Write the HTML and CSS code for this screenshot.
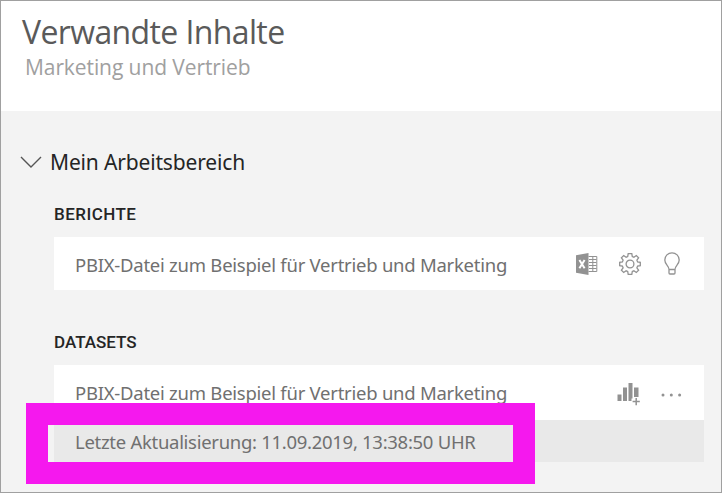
FILE: index.html
```html
<!DOCTYPE html>
<html lang="de">
<head>
<meta charset="utf-8">
<title>Verwandte Inhalte</title>
<link rel="stylesheet" href="styles.css">
</head>
<body>
<main class="panel">
  <header class="header">
    <h1 class="title"><span>Verwandte Inhalte</span></h1>
    <p class="subtitle"><span>Marketing und Vertrieb</span></p>
  </header>
  <section class="workspace">
    <h2 class="workspace-name">
      <svg class="chevron" width="22" height="13" viewBox="0 0 22 13"><path d="M1 1 11 11 21 1"/></svg>
      <span>Mein Arbeitsbereich</span>
    </h2>
    <section class="group reports">
      <h3 class="group-title"><span>BERICHTE</span></h3>
      <div class="row">
        <span class="name">PBIX-Datei zum Beispiel für Vertrieb und Marketing</span>
        <span class="actions">
          <svg class="icon" width="22" height="22" viewBox="0 0 22 22">
            <path class="fill" d="M0 2.200 12.500 0v22L0 19.800z"/>
            <path class="line thin" d="M12.500 3.500h8.300v15h-8.300M16.800 3.500v15M13 6.500h7.500M13 9.500h7.500M13 12.500h7.500M13 15.500h7.500"/>
            <path class="cut" d="m3.400 7 5.200 8.300M8.600 7l-5.200 8.300"/>
          </svg>
          <svg class="icon" width="22" height="22" viewBox="0 0 22 22">
            <path class="line" d="M9.200.7h3.600l.5 2.800 1.600.7 2.400-1.700 2.300 2.300-1.700 2.400.7 1.700 2.700.5v3.200l-2.700.5-.7 1.700 1.700 2.400-2.300 2.300-2.400-1.700-1.600.7-.5 2.800H9.200l-.5-2.800-1.600-.7-2.400 1.700-2.300-2.300 1.700-2.400-.7-1.700-2.700-.5V9.400l2.700-.5.7-1.700-1.700-2.400 2.300-2.300 2.400 1.700 1.600-.7z"/>
            <circle class="line" cx="11" cy="11" r="3.900"/>
          </svg>
          <svg class="icon" width="16" height="23" viewBox="0 0 16 23">
            <path class="line" d="M5 17.500C5 13.500.8 12.500.8 8a7.200 7.200 0 0 1 14.400 0c0 4.500-4.200 5.500-4.200 9.500zM5 17.500v3.500q0 1 1 1h4q1 0 1-1v-3.500"/>
          </svg>
        </span>
      </div>
    </section>
    <section class="group datasets">
      <h3 class="group-title"><span>DATASETS</span></h3>
      <div class="row">
        <span class="name">PBIX-Datei zum Beispiel für Vertrieb und Marketing</span>
        <span class="actions">
          <svg class="icon" width="23" height="23" viewBox="0 0 23 23">
            <path class="fill" d="M.5 11.500h4V18h-4zM6 4.500h4V18H6zM11.500 0h4v15.500h-1V18h-3zM17 4.500h4.500V14H17z"/>
            <path class="plus" d="M19.200 15v7.200M15.600 18.600h7.200"/>
          </svg>
          <svg class="icon" width="22" height="4" viewBox="0 0 22 4"><g class="fill"><circle cx="2" cy="2" r="1.500"/><circle cx="10.300" cy="2" r="1.500"/><circle cx="18.600" cy="2" r="1.500"/></g></svg>
        </span>
      </div>
      <div class="details">
        <span class="refresh">Letzte Aktualisierung: 11.09.2019, 13:38:50 UHR</span>
        <div class="highlight"></div>
      </div>
    </section>
  </section>
</main>
</body>
</html>
```
FILE: styles.css
```css
* { box-sizing: border-box; }
body { margin: 0; font-family: "Noto Sans", "Open Sans", sans-serif; }
h1, h2, h3, p { margin: 0; font-weight: 400; white-space: nowrap; }
svg { display: block; }

.panel {
  width: 722px;
  height: 493px;
  border: 1px solid #a0a0a0;
  background: #f3f3f3;
  overflow: hidden;
}
.header { height: 110px; padding: 10px 0 0 21px; background: #fff; }
.title { font-family: "Open Sans", sans-serif; font-size: 32px; line-height: 42px; color: #5a5a5a; letter-spacing: -.62px; }
.subtitle { padding-left: 3px; font-family: "Open Sans", sans-serif; font-size: 21px; line-height: 29px; color: #a0a0a0; letter-spacing: -.09px; }

.workspace { padding: 35px 17px 0 19px; }
.workspace-name { display: flex; align-items: center; gap: 8px; height: 32px; font-size: 21px; color: #252525; letter-spacing: -.16px; }
.chevron { fill: none; stroke: #555; stroke-width: 1.4; }

.group { padding: 23px 0 0 34px; }
.datasets { padding-top: 39px; }
.group-title { height: 36px; font-family: Roboto, sans-serif; font-size: 17px; font-weight: 500; line-height: 26px; color: #252525; letter-spacing: .45px; }
.datasets .group-title { letter-spacing: 0; }
.row { display: flex; align-items: center; justify-content: space-between; height: 53px; padding: 0 21px; background: #fff; }
.reports .row { padding-right: 24px; }
.datasets .row { height: 55px; }
.name, .refresh { padding-top: 2px; font-size: 18.5px; color: #707070; white-space: nowrap; letter-spacing: -.25px; }
.datasets .name, .refresh { padding: 0; }
.refresh { letter-spacing: -.29px; }
.actions { display: flex; align-items: center; gap: 20px; }
.reports .actions { gap: 20px 23px; }
.reports .icon:first-child { margin-right: -2px; }
.datasets .actions { gap: 21px; padding-top: 4px; }
.icon { flex: none; }
.fill { fill: #929292; }
.line { fill: none; stroke: #929292; stroke-width: 1.3; }
.thin { stroke-width: 1; }
.cut { fill: none; stroke: #fff; stroke-width: 2; }
.plus { fill: none; stroke: #929292; stroke-width: 1.5; }

.details { position: relative; display: flex; align-items: center; height: 42px; padding: 0 21px; background: #e9e9e9; }
.highlight { position: absolute; left: -28px; top: -17px; width: 509px; height: 81px; border: 22px solid #f518ee; }
```
